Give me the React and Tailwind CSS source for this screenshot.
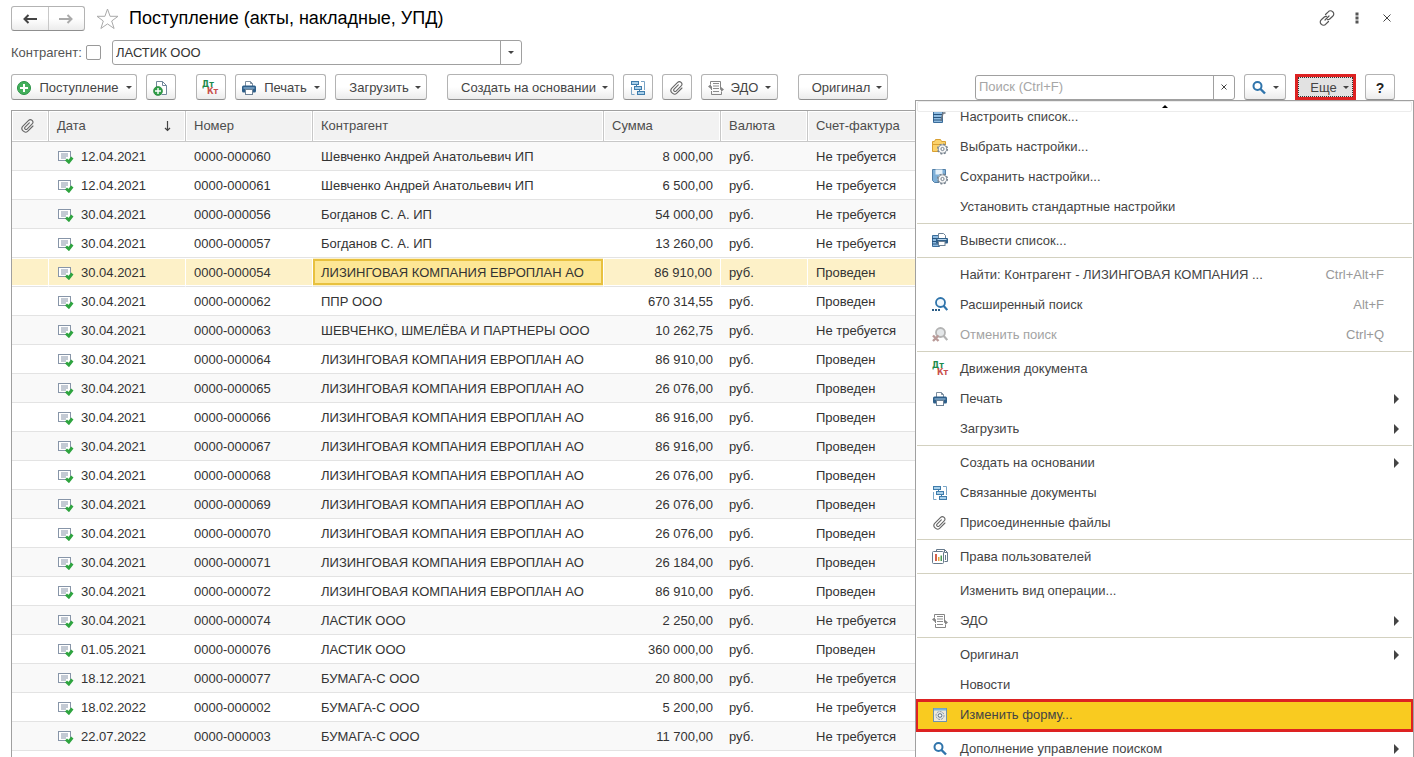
import React from "react";

const BTN =
  "flex h-[26px] shrink-0 items-center justify-center rounded-[3px] border border-[#b3b3b3] border-b-[#8f8f8f] bg-linear-to-b from-white from-50% to-[#ececec] pt-px text-[13px] text-[#444]";

function Caret() {
  return (
    <svg width="6" height="3" viewBox="0 0 6 3" className="shrink-0" aria-hidden="true">
      <path d="M0 0h6L3 3z" fill="#444" />
    </svg>
  );
}

function Svg({ children, size = 16 }) {
  return (
    <svg width={size} height={size} viewBox="0 0 16 16" fill="none" className="shrink-0" aria-hidden="true">
      {children}
    </svg>
  );
}

const Clip = () => (
  <Svg>
    <g transform="rotate(45 8 8)" stroke="#666" strokeWidth="1.1" strokeLinecap="round">
      <path d="M11.5 4.5v7.2a3.5 3.3 0 0 1-7 0V3.6a2.5 2.4 0 0 1 5 0v7.2a1.4 1.4 0 0 1-2.8 0V4.8" />
    </g>
  </Svg>
);

const Printer = () => (
  <Svg>
    <path d="M4.5 6V1.5h5l2 2V6" fill="#fff" stroke="#7d8e9f" />
    <path d="M9.5 1.5v2h2" stroke="#7d8e9f" />
    <rect x="1" y="5.500" width="14" height="7" rx="1.500" fill="#2e5f8a" />
    <path d="M2.500 8h11" stroke="#a8cbe6" />
    <rect x="4.500" y="9.500" width="7" height="5" fill="#fff" stroke="#6d8296" />
  </Svg>
);

const DtKt = () => (
  <svg width="18" height="16" viewBox="0 0 18 16" className="shrink-0 font-bold" aria-hidden="true">
    <text x="0" y="7" fontSize="8" fill="#1d8a4c" fontFamily="DejaVu Sans, sans-serif">Дт</text>
    <text x="5" y="14" fontSize="8" fill="#c9504c" fontFamily="DejaVu Sans, sans-serif">Кт</text>
  </svg>
);

const Structure = () => (
  <Svg>
    <path d="M4.500 14.500h-3V7M11 1.500h3.500V10" stroke="#7aa5c6" />
    <rect x="1.500" y="1.500" width="7" height="3" fill="#a9d0ea" stroke="#3f7cab" />
    <rect x="4.500" y="6.500" width="7" height="3" fill="#a9d0ea" stroke="#3f7cab" />
    <rect x="7.500" y="11.500" width="7" height="3" fill="#a9d0ea" stroke="#3f7cab" />
    <path d="M6.500 4.500v2M9.500 9.500v2" stroke="#3f7cab" />
  </Svg>
);

const Edo = () => (
  <Svg>
    <path d="M2.500 4V1.500h10V6M3.500 11v3.500h10V12" stroke="#858585" />
    <path d="M5 3.500h6M5 6h6M5 8.500h6M5 11.500h6" stroke="#8c8c8c" />
    <path d="M3.500 10V6.500H1M12.500 6v3.500H15" stroke="#858585" />
    <path d="M3 4v5L0 6.500zM13 7v5l3-2.500z" fill="#858585" />
  </Svg>
);

const Magnifier = ({ color = "#2f74ab" }) => (
  <Svg>
    <circle cx="6.500" cy="6" r="4" stroke={color} strokeWidth="2" />
    <path d="M9.500 9l4.500 4.500" stroke={color} strokeWidth="2.400" />
  </Svg>
);

const MagnifierDots = () => (
  <Svg>
    <circle cx="8.500" cy="5.500" r="4.500" fill="#f1f8fd" stroke="#2f74ab" strokeWidth="1.800" />
    <path d="M11.300 8.500l4 4.500" stroke="#2f74ab" strokeWidth="2.200" />
    <path d="M0 12h2v2H0zM3 12h2v2H3zM6 12h2v2H6z" fill="#2b5c86" />
  </Svg>
);

const MagnifierOff = () => (
  <Svg>
    <circle cx="8.500" cy="5.500" r="4.500" fill="#e3e6e8" stroke="#b3b3b3" strokeWidth="1.800" />
    <path d="M11.300 8.500l4 4.500" stroke="#b3b3b3" strokeWidth="2.200" />
    <path d="M1 8.500l5.500 5.500M6.500 8.500L1 14" stroke="#b99a98" strokeWidth="2.400" />
  </Svg>
);

const Gear = () => (
  <g>
    <circle cx="10.500" cy="10" r="4.700" fill="#fff" stroke="#74808c" strokeWidth="1.600" strokeDasharray="2 1.700" />
    <circle cx="10.500" cy="10" r="4.200" fill="#f6f6f6" stroke="#74808c" strokeWidth=".8" />
    <circle cx="10.500" cy="10" r="1.600" fill="#fff" stroke="#74808c" />
  </g>
);

const FolderGear = () => (
  <Svg>
    <path d="M.5 12.500V2.500h2l1-2h5l1 2h4v10z" fill="#fbd26b" stroke="#d9a032" />
    <path d="M.5 5.500h12" stroke="#d9a032" />
    <Gear />
  </Svg>
);

const DiskGear = () => (
  <Svg>
    <path d="M.5.500h13v13h-11l-2-2z" fill="#7fb0d8" stroke="#5280a8" />
    <rect x="3.500" y=".5" width="7" height="5" fill="#e5f1fa" />
    <Gear />
  </Svg>
);

const ListSetup = () => (
  <Svg>
    <path d="M1.500 2.500h9v11h-9z" fill="#8ebbe0" stroke="#3b6d9b" />
    <path d="M1 5.500h9M1 8.500h9M1 11h9" stroke="#28557f" />
    <path d="M9 12l2-8h2.500" stroke="#6d7680" strokeWidth="1.400" />
  </Svg>
);

const ListPrint = () => (
  <Svg>
    <path d="M.5 2.500h7v11h-7z" fill="#8ebbe0" stroke="#3b6d9b" />
    <path d="M0 5.500h5M0 8.500h5M0 11h9" stroke="#28557f" />
    <path d="M6.500 5V.5h5l2 2V5" fill="#fff" stroke="#6d8296" />
    <rect x="4" y="5" width="12" height="5.500" rx="1" fill="#2e5f8a" />
    <path d="M5.500 6.500h9" stroke="#b8d6ec" />
    <rect x="6.500" y="8.500" width="6.500" height="4" fill="#fff" stroke="#6d8296" />
  </Svg>
);

const Rights = () => (
  <Svg>
    <path d="M4.500 3V.5h8l3 3v9h-3" fill="#fff" stroke="#66798b" />
    <path d="M12.500.5v3h3M13.500 6v5" stroke="#66798b" />
    <rect x=".5" y="2.500" width="11" height="12" rx="1" fill="#fff" stroke="#66798b" />
    <path d="M3 5h2v7H3z" fill="#d5604c" />
    <path d="M6 8h1.500v4H6z" fill="#e6a33c" />
    <path d="M8.500 6.500H10V12H8.500z" fill="#4c9b57" />
  </Svg>
);

const FormEdit = () => (
  <Svg>
    <rect x="1.500" y="1.500" width="13" height="13" fill="#eee9da" stroke="#6f93ad" />
    <path d="M2 2.500h12" stroke="#77b3dd" strokeWidth="2" />
    <circle cx="8" cy="8.500" r="4" fill="#dfe3e6" stroke="#8f9aa3" strokeDasharray="2 1" />
    <circle cx="8" cy="8.500" r="1.800" fill="#fff" stroke="#5d6e7b" />
  </Svg>
);

const NewDoc = () => (
  <Svg>
    <path d="M3.500 7V1.500h6l4 4v9h-5" fill="#fff" stroke="#71879b" />
    <path d="M9.500 1.500v4h4" stroke="#71879b" />
    <circle cx="5" cy="11" r="4.500" fill="#2f9e46" stroke="#1f7d35" strokeWidth=".6" />
    <path d="M5 8v6M2 11h6" stroke="#fff" strokeWidth="1.400" />
  </Svg>
);

const AddRound = () => (
  <Svg>
    <circle cx="8" cy="8" r="6.500" fill="#43b05c" stroke="#2a9145" />
    <path d="M8 4v8M4 8h8" stroke="#fff" strokeWidth="2" />
  </Svg>
);

const Posted = () => (
  <svg width="16" height="14" viewBox="0 0 16 14" fill="none" className="shrink-0" aria-hidden="true">
    <rect x=".5" y="1.500" width="12" height="9" fill="#fff" stroke="#8795a8" />
    <path d="M3 4h7M3 6h7M3 8h5" stroke="#8795a8" />
    <path d="M8 9.500l2.800 2.500L14.300 7.500" stroke="#2ea43f" strokeWidth="3" />
  </svg>
);

const ROWS = [
  ["12.04.2021", "0000-000060", "Шевченко Андрей Анатольевич ИП", "8 000,00", "Не требуется"],
  ["12.04.2021", "0000-000061", "Шевченко Андрей Анатольевич ИП", "6 500,00", "Не требуется"],
  ["30.04.2021", "0000-000056", "Богданов С. А. ИП", "54 000,00", "Не требуется"],
  ["30.04.2021", "0000-000057", "Богданов С. А. ИП", "13 260,00", "Не требуется"],
  ["30.04.2021", "0000-000054", "ЛИЗИНГОВАЯ КОМПАНИЯ ЕВРОПЛАН АО", "86 910,00", "Проведен"],
  ["30.04.2021", "0000-000062", "ППР ООО", "670 314,55", "Проведен"],
  ["30.04.2021", "0000-000063", "ШЕВЧЕНКО, ШМЕЛЁВА И ПАРТНЕРЫ ООО", "10 262,75", "Не требуется"],
  ["30.04.2021", "0000-000064", "ЛИЗИНГОВАЯ КОМПАНИЯ ЕВРОПЛАН АО", "86 910,00", "Проведен"],
  ["30.04.2021", "0000-000065", "ЛИЗИНГОВАЯ КОМПАНИЯ ЕВРОПЛАН АО", "26 076,00", "Проведен"],
  ["30.04.2021", "0000-000066", "ЛИЗИНГОВАЯ КОМПАНИЯ ЕВРОПЛАН АО", "86 916,00", "Проведен"],
  ["30.04.2021", "0000-000067", "ЛИЗИНГОВАЯ КОМПАНИЯ ЕВРОПЛАН АО", "86 916,00", "Проведен"],
  ["30.04.2021", "0000-000068", "ЛИЗИНГОВАЯ КОМПАНИЯ ЕВРОПЛАН АО", "26 076,00", "Проведен"],
  ["30.04.2021", "0000-000069", "ЛИЗИНГОВАЯ КОМПАНИЯ ЕВРОПЛАН АО", "26 076,00", "Проведен"],
  ["30.04.2021", "0000-000070", "ЛИЗИНГОВАЯ КОМПАНИЯ ЕВРОПЛАН АО", "26 076,00", "Проведен"],
  ["30.04.2021", "0000-000071", "ЛИЗИНГОВАЯ КОМПАНИЯ ЕВРОПЛАН АО", "26 184,00", "Проведен"],
  ["30.04.2021", "0000-000072", "ЛИЗИНГОВАЯ КОМПАНИЯ ЕВРОПЛАН АО", "86 910,00", "Проведен"],
  ["30.04.2021", "0000-000074", "ЛАСТИК ООО", "2 250,00", "Не требуется"],
  ["01.05.2021", "0000-000076", "ЛАСТИК ООО", "360 000,00", "Проведен"],
  ["18.12.2021", "0000-000077", "БУМАГА-С ООО", "20 800,00", "Не требуется"],
  ["18.02.2022", "0000-000002", "БУМАГА-С ООО", "5 200,00", "Не требуется"],
  ["22.07.2022", "0000-000003", "БУМАГА-С ООО", "11 700,00", "Не требуется"],
];
const SELECTED = 4;

const MENU = [
  [
    { label: "Настроить список...", icon: ListSetup },
    { label: "Выбрать настройки...", icon: FolderGear },
    { label: "Сохранить настройки...", icon: DiskGear },
    { label: "Установить стандартные настройки" },
  ],
  [{ label: "Вывести список...", icon: ListPrint }],
  [
    { label: "Найти: Контрагент - ЛИЗИНГОВАЯ КОМПАНИЯ ...", keys: "Ctrl+Alt+F" },
    { label: "Расширенный поиск", icon: MagnifierDots, keys: "Alt+F" },
    { label: "Отменить поиск", icon: MagnifierOff, keys: "Ctrl+Q", disabled: true },
  ],
  [
    { label: "Движения документа", icon: DtKt },
    { label: "Печать", icon: Printer, sub: true },
    { label: "Загрузить", sub: true },
  ],
  [
    { label: "Создать на основании", sub: true },
    { label: "Связанные документы", icon: Structure },
    { label: "Присоединенные файлы", icon: Clip },
  ],
  [{ label: "Права пользователей", icon: Rights }],
  [{ label: "Изменить вид операции..." }, { label: "ЭДО", icon: Edo, sub: true }],
  [
    { label: "Оригинал", sub: true },
    { label: "Новости" },
    { label: "Изменить форму...", icon: FormEdit, active: true },
  ],
  [{ label: "Дополнение управление поиском", icon: Magnifier, sub: true }],
];

function MenuItem({ item }) {
  const Icon = item.icon;
  return (
    <li role="none" className="relative">
      {item.active && (
        <span className="absolute -inset-x-px top-0 h-[33px] border-[3px] border-[#dd2222] bg-[#f9cb20]" />
      )}
      <button
        type="button"
        role="menuitem"
        disabled={item.disabled}
        className={`relative flex h-[30px] w-full items-center pt-[2px] pr-3 pl-4 text-left ${item.disabled ? "text-[#a3a3a3]" : "text-[#444]"}`}
      >
        <span className="flex w-7 shrink-0">{Icon && <Icon />}</span>
        <span className="flex-1 whitespace-nowrap">{item.label}</span>
        {item.keys && <span className="pr-[17px] text-[#999]">{item.keys}</span>}
        {item.sub && (
          <svg width="8" height="10" viewBox="0 0 8 10" aria-hidden="true">
            <path d="M1 0l5 5-5 5z" fill="#444" />
          </svg>
        )}
      </button>
    </li>
  );
}

function MoreMenu() {
  return (
    <div className="absolute top-full right-0 z-10 w-[499px] border border-[#a0a0a0] bg-white">
      <button
        type="button"
        aria-label="Прокрутить вверх"
        className="mx-px flex h-[11px] w-[495px] items-center justify-center rounded-[2px] border border-[#ececec]"
      >
        <svg width="6" height="3" viewBox="0 0 6 3" aria-hidden="true">
          <path d="M0 3h6L3 0z" fill="#000" />
        </svg>
      </button>
      <div className="overflow-hidden">
        <div role="menu" className="-mt-[11px]">
          {MENU.map((group, i) => (
            <ul key={i} role="group">
              {i > 0 && <li role="separator" className="mx-px my-[2px] -mb-px h-px bg-[#d3d1c0]" />}
              {i > 0 && <li role="none" className="h-[2px]" />}
              {group.map((item) => (
                <MenuItem key={item.label} item={item} />
              ))}
            </ul>
          ))}
        </div>
      </div>
    </div>
  );
}

const TH = "border-r border-b border-[#c8c8c8] px-2 text-left font-normal text-[#4d4d4d] shadow-[inset_1px_1px_0_#fff,inset_-1px_-1px_0_#fff]";

function DocumentsTable() {
  return (
    <div className="mt-[10px] mr-[10px] ml-[11px] min-h-0 flex-1 overflow-hidden border-t border-l border-[#a0a0a0]">
      <table className="w-full table-fixed border-separate border-spacing-0 text-[#333]">
        <colgroup>
          <col className="w-[37px]" />
          <col className="w-[137px]" />
          <col className="w-[127px]" />
          <col className="w-[291px]" />
          <col className="w-[117px]" />
          <col className="w-[87px]" />
          <col />
        </colgroup>
        <thead>
          <tr className="h-[31px] bg-[#f2f2f2]">
            <th className={TH} aria-label="Файлы"><Clip /></th>
            <th className={TH}>
              <span className="flex items-center justify-between pr-[5px]">
                Дата
                <svg width="9" height="11" viewBox="0 0 9 11" fill="none" aria-hidden="true">
                  <path d="M4.500 0v9M2 7l2.500 2.500L7 7" stroke="#444" strokeWidth="1.200" />
                </svg>
              </span>
            </th>
            <th className={TH}>Номер</th>
            <th className={TH}>Контрагент</th>
            <th className={TH}>Сумма</th>
            <th className={TH}>Валюта</th>
            <th className={TH}>Счет-фактура</th>
          </tr>
        </thead>
        <tbody>
          {ROWS.map(([date, num, name, sum, invoice], i) => {
            const sel = i === SELECTED;
            const td = `whitespace-nowrap border-b border-[#e3e3e3] px-2 pt-[2px] ${sel ? "border-r border-r-white shadow-[inset_0_1px_0_#fff,inset_0_-1px_0_#fff]" : ""}`;
            return (
              <tr key={num} className={`h-[29px] ${sel ? "bg-[#fdf1c8]" : i % 2 ? "bg-white" : "bg-[#f9f9f9]"}`}>
                <td className={td}></td>
                <td className={td}>
                  <span className="flex items-center gap-[7px] pl-px">
                    <Posted />
                    {date}
                  </span>
                </td>
                <td className={td}>{num}</td>
                <td className={sel ? "border-r border-b border-r-white border-b-[#e3e3e3]" : td}>
                  {sel ? (
                    <span className="flex h-[26px] items-center border-2 border-[#e8c13f] bg-[#fde795] px-[6px] pt-px whitespace-nowrap">{name}</span>
                  ) : (
                    name
                  )}
                </td>
                <td className={`${td} text-right`}>{sum}</td>
                <td className={td}>руб.</td>
                <td className={td}>{invoice}</td>
              </tr>
            );
          })}
        </tbody>
      </table>
    </div>
  );
}

export default function App() {
  return (
    <div className="flex h-screen flex-col overflow-hidden bg-white pt-[6px] font-['Liberation_Sans',Arial,sans-serif] text-[13px] leading-4 text-[#444]">
      <header className="flex h-[25px] items-center pr-[19px] pl-[11px]">
        <div className="flex h-[25px] w-[74px] rounded-[3px] border border-[#b3b3b3] border-b-[#8f8f8f] bg-linear-to-b from-white from-50% to-[#ececec]">
          <button type="button" aria-label="Назад" className="flex flex-1 items-center justify-center border-r border-[#c8c8c8]">
            <svg width="14" height="10" viewBox="0 0 14 10" fill="none" aria-hidden="true">
              <path d="M1.500 5H14M5.500 1l-4 4 4 4" stroke="#444" strokeWidth="2" />
            </svg>
          </button>
          <button type="button" aria-label="Вперед" className="flex flex-1 items-center justify-center">
            <svg width="14" height="10" viewBox="0 0 14 10" fill="none" aria-hidden="true">
              <path d="M12.500 5H0M8.500 1l4 4-4 4" stroke="#aaa" strokeWidth="2" />
            </svg>
          </button>
        </div>
        <button type="button" aria-label="В избранное" className="ml-[11px]">
          <svg width="23" height="22" viewBox="0 0 23 22" fill="none" aria-hidden="true">
            <path d="M11.500 1l2.600 7.300h7.900l-6.300 4.700 2.400 7.500-6.600-4.600-6.600 4.600 2.400-7.500L1 8.300h7.900z" stroke="#aaa" strokeWidth="1" />
          </svg>
        </button>
        <h1 className="ml-[10px] pb-[2px] text-[18px] leading-6 text-black">Поступление (акты, накладные, УПД)</h1>
        <div className="ml-auto flex items-center gap-[14px] pb-[2px]">
          <button type="button" aria-label="Ссылка">
            <svg width="16" height="16" viewBox="0 0 16 16" fill="none" stroke="#555" strokeWidth="1.200" strokeLinecap="round" aria-hidden="true">
              <path d="M6.500 4.500l2.700-2.700a2.900 2.900 0 0 1 4.500 0 2.900 2.900 0 0 1 0 4.500l-3 2.700a2.600 2.600 0 0 1-2.200.6" />
              <path d="M9.500 11.500l-2.700 2.700a2.900 2.900 0 0 1-4.500 0 2.900 2.900 0 0 1 0-4.500l3-2.700a2.600 2.600 0 0 1 2.200-.6M6 10l4-4" />
            </svg>
          </button>
          <button type="button" aria-label="Меню окна" className="flex w-4 justify-center">
            <svg width="4" height="12" viewBox="0 0 4 12" aria-hidden="true">
              <path d="M.5.500h3v3h-3zM.5 4.500h3v3h-3zM.5 8.500h3v3h-3z" fill="#555" />
            </svg>
          </button>
          <button type="button" aria-label="Закрыть" className="flex w-4 justify-center">
            <svg width="8" height="8" viewBox="0 0 8 8" aria-hidden="true">
              <path d="M.5.500l7 7M7.500.5l-7 7" stroke="#444" strokeWidth="1" />
            </svg>
          </button>
        </div>
      </header>

      <div className="mt-[9px] flex h-[25px] items-center pl-[11px]">
        <label htmlFor="use-filter" className="w-[75px] text-[#555]">Контрагент:</label>
        <input id="use-filter" type="checkbox" className="size-[15px] appearance-none rounded-[2px] border border-[#999] bg-white" />
        <div className="ml-[11px] flex h-[25px] w-[410px] overflow-hidden rounded-[3px] border border-[#a0a0a0]">
          <input aria-label="Контрагент" defaultValue="ЛАСТИК ООО" className="min-w-0 flex-1 px-[3px] text-[#333] outline-none" />
          <button type="button" aria-label="Выбрать" className="flex w-[21px] items-center justify-center border-l border-[#a0a0a0]">
            <Caret />
          </button>
        </div>
      </div>

      <div className="relative mt-[9px] flex h-[26px] shrink-0 items-center pr-[19px] pl-[11px]">
        <div className="flex gap-5">
          <div className="flex gap-[9px]">
            <button type="button" className={`${BTN} w-[126px] gap-[7px]`}><AddRound /><span>Поступление</span><Caret /></button>
            <button type="button" aria-label="Новый документ" className={`${BTN} w-[30px]`}><NewDoc /></button>
          </div>
          <div className="flex gap-[9px]">
            <button type="button" aria-label="Движения документа" className={`${BTN} w-[30px]`}><DtKt /></button>
            <button type="button" className={`${BTN} w-[91px] gap-[7px]`}><Printer />Печать<Caret /></button>
            <button type="button" className={`${BTN} w-[92px] gap-[6px] pl-2`}>Загрузить<Caret /></button>
          </div>
          <div className="flex gap-[9px]">
            <button type="button" className={`${BTN} w-[167px] gap-[6px] pl-2`}>Создать на основании<Caret /></button>
            <button type="button" aria-label="Связанные документы" className={`${BTN} w-[30px]`}><Structure /></button>
            <button type="button" aria-label="Присоединенные файлы" className={`${BTN} w-[30px]`}><Clip /></button>
            <button type="button" className={`${BTN} w-[77px] gap-[7px]`}><Edo />ЭДО<Caret /></button>
          </div>
          <button type="button" className={`${BTN} w-[90px] gap-[6px] pl-2`}>Оригинал<Caret /></button>
        </div>
        <div className="ml-auto flex items-center gap-[9px]">
          <div className="flex h-[25px] w-[260px] overflow-hidden rounded-[3px] border border-[#a0a0a0]">
            <input aria-label="Поиск" placeholder="Поиск (Ctrl+F)" className="min-w-0 flex-1 px-[3px] outline-none placeholder:text-[#a6a6a6]" />
            <button type="button" aria-label="Очистить" className="flex w-[21px] items-center justify-center border-l border-[#a0a0a0]">
              <svg width="6" height="6" viewBox="0 0 6 6" aria-hidden="true">
                <path d="M.5.500l5 5M5.500.5l-5 5" stroke="#444" strokeWidth="1" />
              </svg>
            </button>
          </div>
          <button type="button" aria-label="Найти" className={`${BTN} w-[42px] gap-[6px]`}><Magnifier /><Caret /></button>
          <button type="button" aria-expanded="true" className="flex h-[26px] w-[61px] border-[3px] border-[#dd2222] bg-[#e2e2e2] text-[#444]">
            <span className="flex h-full w-full items-center justify-center gap-[6px] border border-dotted border-[#333] pt-px pl-2">
              Еще<Caret />
            </span>
          </button>
          <button type="button" aria-label="Справка" className={`${BTN} w-[30px]`}><span className="text-[14px] font-bold text-[#222]">?</span></button>
        </div>
        <MoreMenu />
      </div>

      <DocumentsTable />
    </div>
  );
}
